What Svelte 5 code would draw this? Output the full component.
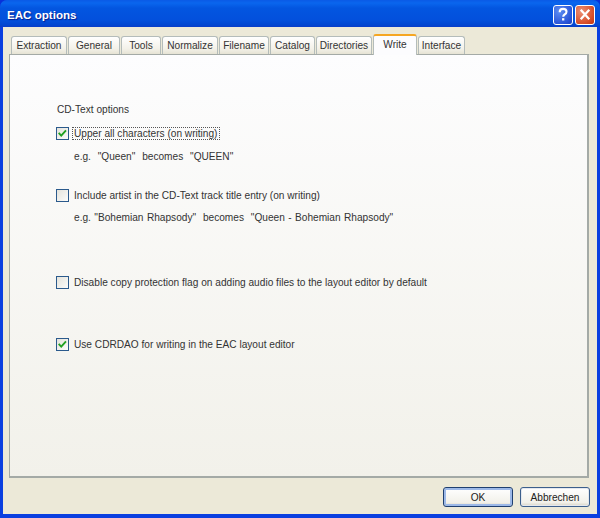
<script lang="ts">
	const tabs = [
		{ label: 'Extraction', width: 56 },
		{ label: 'General', width: 52 },
		{ label: 'Tools', width: 40 },
		{ label: 'Normalize', width: 56 },
		{ label: 'Filename', width: 50 },
		{ label: 'Catalog', width: 45 },
		{ label: 'Directories', width: 56 },
		{ label: 'Write', width: 44 },
		{ label: 'Interface', width: 47 }
	];
	const active = 'Write';
</script>

<div class="window">
	<div class="titlebar">
		<span class="title">EAC options</span>
		<div class="caption-buttons">
			<button class="cap help" aria-label="Help">
				<svg viewBox="0 0 19 19" width="19" height="19">
					<path d="M6 7 Q6 3.6 9.6 3.6 Q13.2 3.6 13.2 6.6 Q13.2 8.4 11.2 9.5 Q9.7 10.4 9.7 12" fill="none" stroke="#fff" stroke-width="2.2" />
					<rect x="8.5" y="13.4" width="2.4" height="2.4" fill="#fff" />
				</svg>
			</button>
			<button class="cap close" aria-label="Close">
				<svg viewBox="0 0 19 19" width="19" height="19">
					<path d="M5 4.5 L14 14.5 M14 4.5 L5 14.5" fill="none" stroke="#fff" stroke-width="2.4" />
				</svg>
			</button>
		</div>
	</div>

	<div class="body">
		<div class="tabs">
			{#each tabs as tab}
				<div class="tab" class:active={tab.label === active} style="width: {tab.width}px">{tab.label}</div>
			{/each}
		</div>

		<div class="panel">
			<div class="group-label">CD-Text options</div>

			<label class="check first">
				<input type="checkbox" checked />
				<span class="box"><svg viewBox="0 0 13 13" width="11" height="11"><path d="M2 5.8 L5 9 L10.6 2.8" fill="none" stroke="#21a121" stroke-width="2.2" /></svg></span>
				<span class="focus">Upper all characters (on writing)</span>
			</label>
			<div class="hint">e.g.&nbsp; "Queen"&nbsp;&nbsp;becomes&nbsp;&nbsp;"QUEEN"</div>

			<label class="check second">
				<input type="checkbox" />
				<span class="box"></span>
				<span>Include artist in the CD-Text track title entry (on writing)</span>
			</label>
			<div class="hint tight">e.g. "Bohemian Rhapsody"&nbsp;&nbsp;becomes&nbsp;&nbsp;"Queen - Bohemian Rhapsody"</div>

			<label class="check third">
				<input type="checkbox" />
				<span class="box"></span>
				<span>Disable copy protection flag on adding audio files to the layout editor by default</span>
			</label>

			<label class="check fourth">
				<input type="checkbox" checked />
				<span class="box"><svg viewBox="0 0 13 13" width="11" height="11"><path d="M2 5.8 L5 9 L10.6 2.8" fill="none" stroke="#21a121" stroke-width="2.2" /></svg></span>
				<span>Use CDRDAO for writing in the EAC layout editor</span>
			</label>
		</div>

		<div class="actions">
			<button class="btn default">OK</button>
			<button class="btn">Abbrechen</button>
		</div>
	</div>
</div>

<style>
	:global(body) {
		margin: 0;
		background: #0831d9;
	}

	.window {
		width: 600px;
		height: 518px;
		display: flex;
		flex-direction: column;
		box-sizing: border-box;
		font-family: "Liberation Sans", Arial, sans-serif;
		font-size: 10.15px;
		color: #333;
		background: #0a3fe0;
		border-radius: 7px 7px 0 0;
		overflow: hidden;
	}

	.titlebar {
		height: 27px;
		flex: none;
		display: flex;
		align-items: center;
		justify-content: space-between;
		padding: 2px 5px 0 7px;
		box-sizing: border-box;
		background: linear-gradient(#0a5ae6 0, #0a66ee 3px, #0356e0 8px, #0350dc 20px, #0246d0 25px, #0a3cc8 27px);
	}

	.title {
		color: #fff;
		font-weight: 700;
		font-size: 11.6px;
		font-family: "Liberation Sans", sans-serif;
		text-shadow: 1px 1px 1px #0a1e8c;
	}

	.caption-buttons {
		display: flex;
		gap: 2px;
	}

	.cap {
		width: 20px;
		height: 20px;
		padding: 0;
		border: 1px solid #fff;
		border-radius: 3px;
		display: flex;
		align-items: center;
		justify-content: center;
	}

	.help {
		background: radial-gradient(circle at 30% 30%, #5d8ef2, #2a55d8 70%, #1c3fc0);
	}

	.close {
		background: radial-gradient(circle at 30% 30%, #ec9076, #d8512c 65%, #bf3310);
	}

	.body {
		flex: 1;
		display: flex;
		flex-direction: column;
		margin: 0 3px 4px;
		padding: 9px 8px 0 6px;
		background: #ece9d8;
		min-height: 0;
	}

	.tabs {
		display: flex;
		gap: 1px;
		height: 18px;
		margin-left: 2px;
		align-items: flex-end;
		flex: none;
		position: relative;
		z-index: 1;
	}

	.tab {
		height: 18px;
		box-sizing: border-box;
		padding-top: 3px;
		text-align: center;
		border: 1px solid #b4bcba;
		border-bottom: none;
		border-radius: 3px 3px 0 0;
		background: linear-gradient(#fff, #f3f1e8 70%, #e6e3d4);
	}

	.tab.active {
		height: 21px;
		margin-bottom: -1px;
		padding-top: 3px;
		background: #fcfcfe;
		border-top: 2px solid #f5a623;
	}

	.panel {
		height: 424px;
		flex: none;
		box-sizing: border-box;
		border: 1px solid #a4aaa6;
		border-right-width: 2px;
		border-bottom-width: 2px;
		background: linear-gradient(#fdfdfe, #f2f1ea);
		padding: 48px 0 0 47px;
	}

	.group-label {
		line-height: 13px;
	}

	.check {
		display: flex;
		align-items: center;
		gap: 5px;
		height: 15px;
	}

	.check input {
		display: none;
	}

	.box {
		width: 11px;
		height: 11px;
		flex: none;
		margin-left: -1px;
		border: 1px solid #2b5a8c;
		background: linear-gradient(135deg, #e4e3dc, #fcfcfa);
		display: flex;
		align-items: center;
		justify-content: center;
	}

	.focus {
		outline: 1px dotted #555;
		padding: 0 1px;
		margin-left: -1px;
	}

	.first {
		margin-top: 10px;
	}

	.second {
		margin-top: 25px;
	}

	.third {
		margin-top: 51px;
	}

	.fourth {
		margin-top: 47px;
	}

	.hint {
		margin: 9px 0 0 17px;
		line-height: 13px;
		word-spacing: 0.6px;
	}

	.hint.tight {
		margin-top: 8px;
	}

	.actions {
		display: flex;
		justify-content: flex-end;
		gap: 7px;
		margin-right: -1px;
		padding: 9px 0 0;
	}

	.btn {
		width: 70px;
		height: 20px;
		padding: 0;
		font: inherit;
		color: #222;
		border: 1px solid #3c5f8c;
		border-radius: 3px;
		background: linear-gradient(#fff, #f2f1ea 80%, #d8d4c6);
		box-shadow: inset 0 0 0 1px #e4e8ee;
	}

	.btn.default {
		border-color: #1f3f70;
		box-shadow: inset 0 0 0 2px #9db9e8;
	}
</style>
